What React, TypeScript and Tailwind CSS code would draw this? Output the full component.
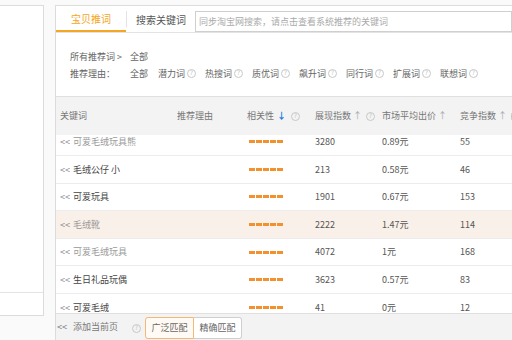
const REASONS = ['潜力词', '热搜词', '质优词', '飙升词', '同行词', '扩展词', '联想词']

const ROWS = [
  { kw: '可爱毛绒玩具熊', show: '3280', price: '0.89元', comp: '55', added: true },
  { kw: '毛绒公仔 小', show: '213', price: '0.58元', comp: '46', added: false },
  { kw: '可爱玩具', show: '1901', price: '0.67元', comp: '153', added: false },
  { kw: '毛绒靴', show: '2222', price: '1.47元', comp: '114', added: true, hover: true },
  { kw: '可爱毛绒玩具', show: '4072', price: '1元', comp: '168', added: true },
  { kw: '生日礼品玩偶', show: '3623', price: '0.57元', comp: '83', added: false },
  { kw: '可爱毛绒', show: '41', price: '0元', comp: '12', added: false },
]

const COLS = 'grid grid-cols-[117px_70px_68px_67px_78px_1fr]'

function Help() {
  return (
    <span className="inline-flex items-center justify-center w-[9px] h-[9px] rounded-full border border-[#c8c8c8] text-[6px] leading-none text-[#bbb] ml-[2px]">
      ?
    </span>
  )
}

function Bars() {
  return (
    <div className="flex gap-[1px] ml-[2px]">
      {[0, 1, 2, 3, 4].map((i) => (
        <span key={i} className="w-[6px] h-[3px] bg-[#f2922f]" />
      ))}
    </div>
  )
}

export default function App() {
  return (
    <div
      className="w-[512px] h-[340px] overflow-hidden bg-[#fafafa] flex text-[9px] text-[#666]"
      style={{ fontFamily: '"Noto Sans CJK SC", "Noto Sans", sans-serif' }}
    >
      {/* 左侧面板 */}
      <div className="w-[44px] shrink-0 mt-[5px] h-[311px] bg-white border-y border-r border-[#dcdcdc] flex flex-col">
        <div className="h-[287px] border-b border-[#e3e3e3]" />
      </div>

      {/* 右侧主体 */}
      <div className="ml-[11px] mt-[5px] flex-1 min-w-0 bg-white border-l border-t border-[#dcdcdc] flex flex-col">
        {/* 标签 */}
        <div className="h-[27px] flex border-b border-[#e3e3e3] shrink-0">
          <div className="w-[70px] h-full border-b-2 border-[#f5a623] flex items-center justify-center text-[#f5a623] text-[10px]">
            宝贝推词
          </div>
          <div className="w-px bg-[#e3e3e3] my-[5px]" />
          <div className="w-[68px] flex items-center justify-center text-[10px] text-[#555]">搜索关键词</div>
          <div className="flex-1 mt-[5px] h-[21px] border border-[#cfcfcf] flex items-center pl-[3px] text-[#aaa] whitespace-nowrap overflow-hidden">
            同步淘宝网搜索，请点击查看系统推荐的关键词
          </div>
        </div>

        {/* 筛选 */}
        <div className="h-[63px] shrink-0 pt-[17px] pl-[14px] flex flex-col gap-[3px]">
          <div className="flex">
            <span className="w-[60px]">所有推荐词 &gt;</span>
            <span>全部</span>
          </div>
          <div className="flex">
            <span className="w-[60px]">推荐理由：</span>
            <span className="w-[28px]">全部</span>
            {REASONS.map((r) => (
              <span key={r} className="w-[47px] flex items-center whitespace-nowrap">
                {r}
                <Help />
              </span>
            ))}
          </div>
        </div>

        {/* 表头 */}
        <div className={`${COLS} h-[39px] shrink-0 bg-[#f3f3f3] border-t border-[#e0e0e0] items-center text-[#777]`}>
          <div className="pl-[4px]">关键词</div>
          <div className="pl-[4px]">推荐理由</div>
          <div className="pl-[4px] flex items-center whitespace-nowrap">
            相关性
            <span className="text-[#1d7be0] font-bold mx-[3px]">↓</span>
            <Help />
          </div>
          <div className="pl-[4px] flex items-center whitespace-nowrap">
            展现指数
            <span className="text-[#aaa] mx-[2px]">↑</span>
            <Help />
          </div>
          <div className="pl-[4px] flex items-center whitespace-nowrap">
            市场平均出价
            <span className="text-[#aaa] mx-[2px]">↑</span>
          </div>
          <div className="pl-[4px] flex items-center whitespace-nowrap overflow-hidden">
            竞争指数
            <span className="text-[#aaa] mx-[2px]">↑</span>
            <Help />
          </div>
        </div>

        {/* 表格内容 */}
        <div className="h-[179px] shrink-0 overflow-hidden border-b border-[#e0e0e0]">
          <div className="-mt-[6.6px]">
            {ROWS.map((r) => (
              <div
                key={r.kw}
                className={`${COLS} h-[27.6px] items-center border-b border-[#ececec] ${r.hover ? 'bg-[#f9f0e9]' : 'bg-white'}`}
              >
                <div className={`pl-[4px] whitespace-nowrap ${r.added ? 'text-[#999]' : 'text-[#444]'}`}>
                  <span className="text-[#888] mr-[3px]">&lt;&lt;</span>
                  {r.kw}
                </div>
                <div />
                <div className="pl-[4px]">
                  <Bars />
                </div>
                <div className="pl-[4px] text-[#555]">{r.show}</div>
                <div className="pl-[4px] text-[#555]">{r.price}</div>
                <div className="pl-[4px] text-[#555]">{r.comp}</div>
              </div>
            ))}
          </div>
        </div>

        {/* 底部操作 */}
        <div className="flex-1 bg-[#f3f3f3] flex items-center pl-[1px] text-[#777]">
          <span className="mr-[6px]">&lt;&lt;</span>
          <span>添加当前页</span>
          <span className="ml-[12px]">
            <Help />
          </span>
          <div className="ml-[4px] flex h-[22px] mt-[2px]">
            <button className="w-[49px] h-full border border-[#f5b67a] bg-[#fffaf3] rounded-l-[3px] text-[9px] text-[#666]">
              广泛匹配
            </button>
            <button className="w-[48px] h-full border border-l-0 border-[#cfcfcf] bg-white rounded-r-[3px] text-[9px] text-[#666]">
              精确匹配
            </button>
          </div>
        </div>
      </div>
    </div>
  )
}
